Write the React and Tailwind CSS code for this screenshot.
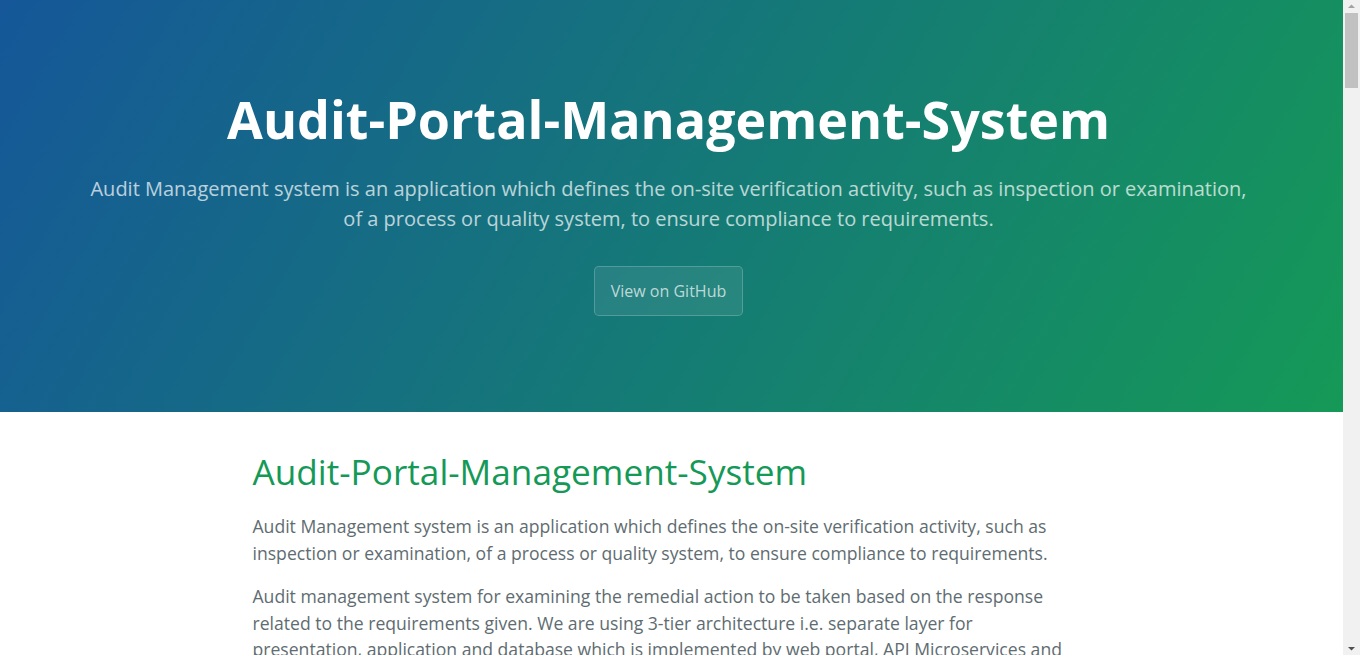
export default function App() {
  return (
    <div className="font-['Open_Sans',sans-serif] text-[#606c71] leading-[1.5]">
      <div className="mr-[17px]">
        {/* Page header */}
        <section className="bg-[linear-gradient(120deg,#155799,#159957)] text-white text-center pl-[80px] pr-[86px] pt-20 pb-20">
          <h1 className="text-[52px] font-bold leading-[1.5] mb-[1.6px]">
            Audit-Portal-Management-System
          </h1>
          <h2 className="text-[20px] font-normal opacity-70 mt-[15.6px] mb-8 leading-[1.5]">
            Audit Management system is an application which defines the on-site verification activity, such as inspection or examination, of a process or quality system, to ensure compliance to requirements.
          </h2>
          <a
            href="#"
            className="inline-block mb-4 px-4 py-3 text-base leading-[1.5] text-white/70 bg-white/[0.08] border border-white/20 rounded-[0.3rem]"
          >
            View on GitHub
          </a>
        </section>

        {/* Main content */}
        <section className="max-w-[1024px] mx-auto pl-[93px] pr-[99px] pt-[33px] pb-8 text-[17.6px]">
          <h1 className="text-[35.2px] font-normal text-[#159957] mb-4 leading-[1.5]">
            Audit-Portal-Management-System
          </h1>
          <p className="mb-[17px]">
            Audit Management system is an application which defines the on-site verification activity, such as inspection or examination, of a process or quality system, to ensure compliance to requirements.
          </p>
          <p className="mb-4">
            Audit management system for examining the remedial action to be taken based on the response related to the requirements given. We are using 3-tier architecture i.e. separate layer for presentation, application and database which is implemented by web portal, API Microservices and database.
          </p>
          <h2 className="text-[26.4px] font-normal text-[#159957] mt-8 mb-4 leading-[1.5]">
            Modules
          </h2>
          <ul className="list-disc pl-8 mb-4">
            <li>Authorization Microservice</li>
            <li>Audit Checklist Microservice</li>
            <li>Audit Benchmark Microservice</li>
            <li>Audit Severity Microservice</li>
            <li>Audit Management Portal</li>
          </ul>
          <h2 className="text-[26.4px] font-normal text-[#159957] mt-8 mb-4 leading-[1.5]">
            Technologies Used
          </h2>
          <ul className="list-disc pl-8 mb-4">
            <li>ASP.NET Core Web API</li>
            <li>ASP.NET Core MVC</li>
            <li>Entity Framework Core</li>
            <li>SQL Server</li>
            <li>Azure</li>
          </ul>
        </section>
      </div>

      {/* Scrollbar */}
      <div className="fixed top-0 right-0 h-screen w-[17px] bg-[#f1f1f1] flex flex-col items-center">
        <svg width="17" height="17" viewBox="0 0 17 17" className="shrink-0">
          <path d="M5 8h7l-3.5-3.5z" fill="#a3a3a3" />
        </svg>
        <div className="w-[13px] h-[75px] bg-[#c1c1c1] mt-[-4px]" />
        <div className="flex-1" />
        <svg width="17" height="17" viewBox="0 0 17 17" className="shrink-0">
          <path d="M5 9h7l-3.5 3.5z" fill="#505050" />
        </svg>
      </div>
    </div>
  );
}
